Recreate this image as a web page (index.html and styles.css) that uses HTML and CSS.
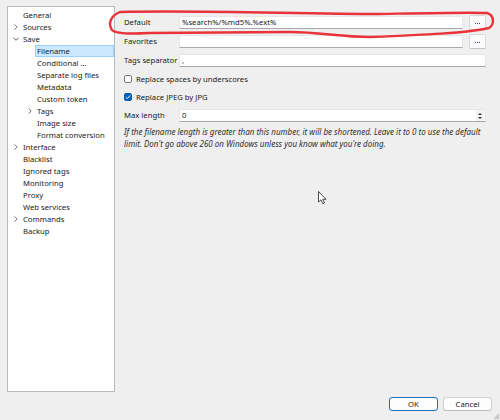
FILE: index.html
```html
<!DOCTYPE html>
<html>
<head>
<meta charset="utf-8">
<link rel="stylesheet" href="styles.css">
</head>
<body>
<div class="dialog">
  <div class="main">
    <div class="tree">
      <div class="item l0"><span class="chev"></span><span class="txt">General</span></div>
      <div class="item l0"><span class="chev"><svg width="6" height="6" viewBox="0 0 6 6"><path d="M1.5 0.5 L4.2 3 L1.5 5.5" fill="none" stroke="#6b6b6b" stroke-width="0.9"/></svg></span><span class="txt">Sources</span></div>
      <div class="item l0"><span class="chev"><svg width="6" height="6" viewBox="0 0 6 6"><path d="M0.5 1.8 L3 4.3 L5.5 1.8" fill="none" stroke="#444" stroke-width="0.9"/></svg></span><span class="txt">Save</span></div>
      <div class="item l1"><span class="chev"></span><span class="txt sel">Filename</span></div>
      <div class="item l1"><span class="chev"></span><span class="txt">Conditional ...</span></div>
      <div class="item l1"><span class="chev"></span><span class="txt">Separate log files</span></div>
      <div class="item l1"><span class="chev"></span><span class="txt">Metadata</span></div>
      <div class="item l1"><span class="chev"></span><span class="txt">Custom token</span></div>
      <div class="item l1"><span class="chev"><svg width="6" height="6" viewBox="0 0 6 6"><path d="M1.5 0.5 L4.2 3 L1.5 5.5" fill="none" stroke="#6b6b6b" stroke-width="0.9"/></svg></span><span class="txt">Tags</span></div>
      <div class="item l1"><span class="chev"></span><span class="txt">Image size</span></div>
      <div class="item l1"><span class="chev"></span><span class="txt">Format conversion</span></div>
      <div class="item l0"><span class="chev"><svg width="6" height="6" viewBox="0 0 6 6"><path d="M1.5 0.5 L4.2 3 L1.5 5.5" fill="none" stroke="#6b6b6b" stroke-width="0.9"/></svg></span><span class="txt">Interface</span></div>
      <div class="item l0"><span class="chev"></span><span class="txt">Blacklist</span></div>
      <div class="item l0"><span class="chev"></span><span class="txt">Ignored tags</span></div>
      <div class="item l0"><span class="chev"></span><span class="txt">Monitoring</span></div>
      <div class="item l0"><span class="chev"></span><span class="txt">Proxy</span></div>
      <div class="item l0"><span class="chev"></span><span class="txt">Web services</span></div>
      <div class="item l0"><span class="chev"><svg width="6" height="6" viewBox="0 0 6 6"><path d="M1.5 0.5 L4.2 3 L1.5 5.5" fill="none" stroke="#6b6b6b" stroke-width="0.9"/></svg></span><span class="txt">Commands</span></div>
      <div class="item l0"><span class="chev"></span><span class="txt">Backup</span></div>
    </div>
    <div class="form">
      <div class="label">Default</div>
      <div class="field"><div class="input">%search%/%md5%.%ext%</div><div class="dots"><span></span><span></span><span></span></div></div>
      <div class="label">Favorites</div>
      <div class="field"><div class="input"></div><div class="dots"><span></span><span></span><span></span></div></div>
      <div class="label">Tags separator</div>
      <div class="field"><div class="input">,</div></div>
      <div class="check"><span class="box"></span>Replace spaces by underscores</div>
      <div class="check"><span class="box on"><svg width="8" height="8" viewBox="0 0 8 8"><path d="M1.8 4.2 L3.3 5.6 L6.3 2.4" fill="none" stroke="#fff" stroke-width="1"/></svg></span>Replace JPEG by JPG</div>
      <div class="label">Max length</div>
      <div class="field"><div class="input spin">0<span class="arrows"><span class="arr up"></span><span class="arr down"></span></span></div></div>
      <div class="help">If the filename length is greater than this number, it will be shortened. Leave it to 0 to use the default limit. Don't go above 260 on Windows unless you know what you're doing.</div>
    </div>
  </div>
  <div class="footer">
    <div class="btn default">OK</div>
    <div class="btn">Cancel</div>
  </div>
  <svg class="scribble" width="500" height="60" viewBox="0 0 500 60">
    <path d="M120 12 C 200 10, 300 14, 380 14 C 430 13, 470 12, 487 13 C 494 15, 495 24, 489 28 C 470 33, 420 35, 370 37 C 340 37, 320 32, 290 32 L 150 33 C 130 34, 116 34, 112 30 C 108 24, 110 16, 120 12" fill="none" stroke="#e8333a" stroke-width="2.4" stroke-linecap="round"/>
  </svg>
  <svg class="cursor" width="12" height="16" viewBox="0 0 12 16">
    <path d="M0.5 0.5 L0.5 11 L3 8.8 L4.8 12.8 L6.5 12 L4.8 8.3 L8 8.3 Z" fill="#fff" stroke="#222" stroke-width="0.8"/>
  </svg>
  <svg class="grip" width="6" height="6" viewBox="0 0 6 6">
    <path d="M6 0 L6 6 L0 6 Z" fill="#c8c8c8"/>
  </svg>
</div>
</body>
</html>
```
FILE: styles.css
```css
html, body {
  margin: 0;
  padding: 0;
}
body {
  background: #efefef;
  font-family: "Noto Sans", "Open Sans", sans-serif;
  font-size: 7.7px;
  color: #1a1a1a;
}
.dialog {
  position: relative;
  width: 500px;
  height: 420px;
  display: flex;
  flex-direction: column;
  overflow: hidden;
}
.main {
  flex: 1;
  display: flex;
  padding: 6px 0 0 7px;
  min-height: 0;
}
.tree {
  background: #fff;
  border: 1px solid #b9b9c0;
  padding-top: 2px;
  box-sizing: border-box;
  width: 108px;
}
.item {
  display: flex;
  align-items: center;
  height: 12px;
}
.item.l0 { padding-left: 5px; }
.item.l1 { padding-left: 19px; }
.chev {
  width: 10px;
  height: 12px;
  display: flex;
  align-items: center;
  flex: none;
}
.txt {
  line-height: 12px;
  white-space: nowrap;
}
.txt.sel {
  flex: 1;
  margin-left: -2px;
  padding-left: 1px;
  background: #cce8ff;
  border: 1px solid #99d1ff;
  line-height: 10px;
}
.form {
  flex: 1;
  display: grid;
  grid-template-columns: 55px 1fr;
  grid-auto-rows: min-content;
  row-gap: 6px;
  padding: 10px 14px 0 9px;
  align-content: start;
}
.label {
  line-height: 13px;
  white-space: nowrap;
}
.field {
  display: flex;
  gap: 6px;
  align-items: center;
  height: 13px;
}
.input {
  flex: 1;
  height: 13px;
  box-sizing: border-box;
  background: #fff;
  border: 1px solid #e6e6e6;
  border-bottom-color: #a8a8a8;
  border-radius: 1px;
  line-height: 11px;
  padding-left: 2px;
  position: relative;
}
.dots {
  width: 17px;
  height: 15px;
  margin: -1px 0;
  box-sizing: border-box;
  background: #fbfbfb;
  border: 1px solid #d8d8d8;
  border-bottom-color: #c4c4c4;
  border-radius: 2px;
  display: flex;
  justify-content: center;
  align-items: center;
  gap: 1px;
  padding-top: 2px;
}
.dots span {
  width: 1px;
  height: 1px;
  background: #4a3f6b;
}
.check {
  grid-column: 1 / 3;
  display: flex;
  align-items: center;
  gap: 4px;
  height: 12px;
}
.box {
  width: 8px;
  height: 8px;
  box-sizing: border-box;
  border: 1px solid #7a7a7a;
  border-radius: 2px;
  background: #fafafa;
  display: flex;
}
.box.on {
  background: #005fb8;
  border-color: #005fb8;
}
.box.on svg {
  margin: -1px;
}
.spin .arrows {
  position: absolute;
  right: 1px;
  top: 0;
  width: 8px;
  height: 11px;
  background: #f3f3f3;
  display: flex;
  flex-direction: column;
  align-items: center;
  justify-content: center;
  gap: 2px;
}
.arr {
  width: 0;
  height: 0;
  border-left: 2px solid transparent;
  border-right: 2px solid transparent;
}
.arr.up { border-bottom: 2px solid #333; }
.arr.down { border-top: 2px solid #333; }
.help {
  grid-column: 1 / 3;
  font-style: italic;
  font-size: 8px;
  line-height: 12px;
  color: #303030;
  margin-top: -2px;
}
.footer {
  display: flex;
  justify-content: flex-end;
  gap: 5px;
  padding: 5px 8px 9px 0;
  height: 28px;
  box-sizing: border-box;
}
.btn {
  width: 49px;
  height: 14px;
  box-sizing: border-box;
  background: #fdfdfd;
  border: 1px solid #d0d0d0;
  border-bottom-color: #bcbcbc;
  border-radius: 3px;
  text-align: center;
  line-height: 12px;
}
.btn.default {
  border-color: #1c6fc4;
}
.scribble {
  position: absolute;
  left: 0;
  top: 0;
  pointer-events: none;
}
.cursor {
  position: absolute;
  left: 318px;
  top: 191px;
}
.grip {
  position: absolute;
  right: 1px;
  bottom: 1px;
}
```
